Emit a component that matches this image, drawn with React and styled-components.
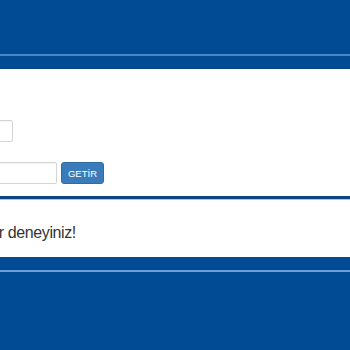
import React from "react";
import styled, { createGlobalStyle } from "styled-components";

const Global = createGlobalStyle`
  html, body { margin: 0; padding: 0; background: #ffffff; }
  body { font-family: "Liberation Sans", Arial, sans-serif; color: #333333; overflow: hidden; }
`;

const Page = styled.div`
  width: 350px;
  height: 350px;
  display: flex;
  flex-direction: column;
  overflow: hidden;
`;

const TopBar = styled.header`
  height: 54px;
  background: #014b95;
  flex: none;
`;

const Stripe = styled.div`
  height: 2px;
  background: ${(p) => p.$color};
  flex: none;
`;

const SubBar = styled.div`
  height: ${(p) => p.$h}px;
  background: #014b95;
  border-bottom: ${(p) => (p.$edge ? "1px solid #0a4382" : "none")};
  box-sizing: border-box;
  flex: none;
`;

const FormArea = styled.section`
  height: 127px;
  flex: none;
  padding-top: 51px;
  box-sizing: border-box;
`;

const Container = styled.div`
  margin-left: -171px;
  display: flex;
  flex-direction: column;
  gap: 20px;
`;

const Row = styled.div`
  display: flex;
  align-items: center;
  gap: 4px;
`;

const Input = styled.input`
  width: ${(p) => p.$w}px;
  height: 22px;
  box-sizing: border-box;
  border: 1px solid #d4d4d4;
  border-radius: 2px;
  background: #fff;
  padding: 2px 6px;
  font-family: "Liberation Sans", Arial, sans-serif;
  font-size: 12px;
  box-shadow: inset 0 1px 1px rgba(0, 0, 0, 0.05);
  outline: none;
`;

const Button = styled.button`
  height: 22px;
  width: 43px;
  box-sizing: border-box;
  border: 1px solid #2e6da4;
  border-radius: 3px;
  background: #3a7cba;
  color: #fff;
  font-family: "Liberation Sans", Arial, sans-serif;
  font-size: 9.5px;
  padding: 0;
`;

const Divider = styled.div`
  height: 3px;
  background: #0f4583;
  border-bottom: 1px solid #a7c6ea;
  flex: none;
`;

const MessageArea = styled.section`
  height: 57px;
  flex: none;
  box-sizing: border-box;
  padding-top: 21px;
`;

const Message = styled.p`
  margin: 0 0 0 -161px;
  font-size: 16px;
  letter-spacing: -0.4px;
  line-height: 23px;
  color: #333;
  white-space: nowrap;
`;

const Footer = styled.footer`
  flex: 1;
  background: #014b95;
`;

export default function App() {
  return (
    <Page>
      <Global />
      <TopBar />
      <Stripe $color="#4a87c6" />
      <SubBar $h={13} $edge />
      <FormArea>
        <Container>
          <Row>
            <Input $w={184} type="text" />
          </Row>
          <Row>
            <Input $w={228} type="text" />
            <Button>GETİR</Button>
          </Row>
        </Container>
      </FormArea>
      <Divider />
      <MessageArea>
        <Message>Lütfen daha sonra tekrar deneyiniz!</Message>
      </MessageArea>
      <SubBar $h={13} />
      <Stripe $color="#6a9fdc" />
      <Footer />
    </Page>
  );
}
